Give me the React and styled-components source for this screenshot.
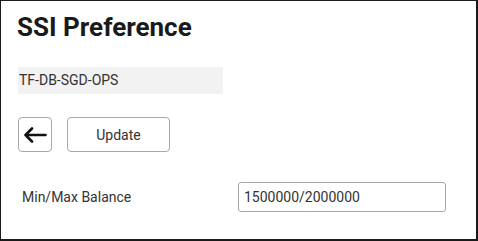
import styled, { createGlobalStyle } from 'styled-components';

const GlobalStyle = createGlobalStyle`
  html, body {
    margin: 0;
    padding: 0;
    background: #ffffff;
  }
  body {
    font-family: Roboto, "Liberation Sans", Arial, sans-serif;
    color: #333333;
  }
`;

function App() {
  return (
    <>
      <GlobalStyle />
      <Frame>
        <Title>SSI Preference</Title>
        <AccountTag>TF-DB-SGD-OPS</AccountTag>
        <Toolbar>
          <IconButton aria-label="Back">
            <svg width="24" height="16" viewBox="0 0 24 16" fill="none">
              <path
                d="M22.5 8H2.5M9 1.5L2.5 8L9 14.5"
                stroke="#111"
                strokeWidth="2.6"
                strokeLinecap="round"
                strokeLinejoin="round"
              />
            </svg>
          </IconButton>
          <TextButton>Update</TextButton>
        </Toolbar>
        <FieldRow>
          <Label>Min/Max Balance</Label>
          <Input defaultValue="1500000/2000000" />
        </FieldRow>
      </Frame>
    </>
  );
}

const Frame = styled.div`
  box-sizing: border-box;
  width: 478px;
  height: 241px;
  border: 1px solid #1a1a1a;
  border-right-width: 2px;
  border-bottom-width: 2px;
  padding: 11px 0 0 16px;
  display: flex;
  flex-direction: column;
  align-items: flex-start;
`;

const Title = styled.h1`
  margin: 0;
  font-size: 26px;
  line-height: 30px;
  font-weight: 700;
  color: #1a1a1a;
`;

const AccountTag = styled.div`
  margin-top: 25px;
  margin-left: 1px;
  box-sizing: border-box;
  width: 205px;
  height: 27px;
  padding-left: 1px;
  background: #f2f2f2;
  font-size: 14px;
  line-height: 27px;
  color: #333333;
`;

const Toolbar = styled.div`
  margin-top: 23px;
  margin-left: 1px;
  display: flex;
  gap: 15px;
`;

const ButtonBase = styled.button`
  box-sizing: border-box;
  height: 35px;
  background: #ffffff;
  border: 1px solid #a8a8a8;
  border-radius: 4px;
  font-family: Roboto, "Liberation Sans", Arial, sans-serif;
  color: #333333;
  padding: 0;
  display: flex;
  align-items: center;
  justify-content: center;
`;

const IconButton = styled(ButtonBase)`
  width: 34px;
`;

const TextButton = styled(ButtonBase)`
  width: 103px;
  font-size: 14px;
`;

const FieldRow = styled.div`
  margin-top: 30px;
  display: flex;
  align-items: center;
`;

const Label = styled.label`
  width: 216px;
  padding-left: 5px;
  box-sizing: border-box;
  font-size: 14px;
  color: #333333;
`;

const Input = styled.input`
  margin-left: 5px;
  box-sizing: border-box;
  width: 208px;
  height: 30px;
  border: 1px solid #a8a8a8;
  border-radius: 3px;
  padding: 0 5px;
  font-family: Roboto, "Liberation Sans", Arial, sans-serif;
  font-size: 14px;
  color: #333333;
  outline: none;
`;

export default App;
